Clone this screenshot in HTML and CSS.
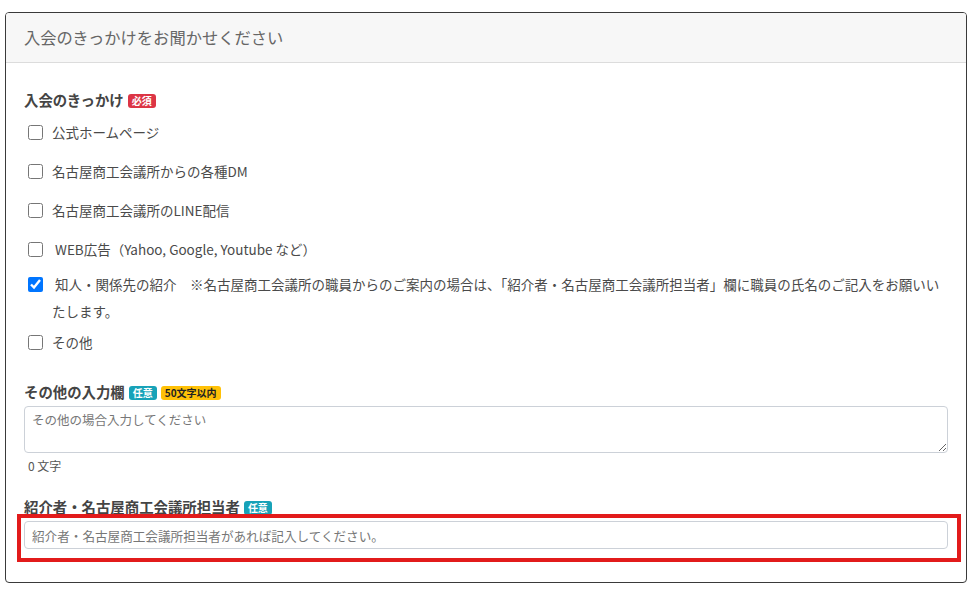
FILE: index.html
```html
<!DOCTYPE html>
<html lang="ja">

<head>
    <meta charset="UTF-8">
    <meta name="viewport" content="width=device-width, initial-scale=1.0">
    <title>入会のきっかけ</title>
    <link rel="stylesheet" href="styles.css">
</head>

<body>
    <div class="card">
        <div class="card-head">入会のきっかけをお聞かせください</div>
        <div class="card-body">
            <div class="field-label">入会のきっかけ<span class="badge badge-red">必須</span></div>
            <ul class="check-list">
                <li class="check-row"><input type="checkbox"><label>公式ホームページ</label></li>
                <li class="check-row"><input type="checkbox"><label>名古屋商工会議所からの各種DM</label></li>
                <li class="check-row"><input type="checkbox"><label>名古屋商工会議所のLINE配信</label></li>
                <li class="check-row"><input type="checkbox"><label>&nbsp;WEB広告（Yahoo, Google, Youtube など）</label></li>
                <li class="check-row check-long"><input type="checkbox" checked><label>&nbsp;知人・関係先の紹介　※名古屋商工会議所の職員からのご案内の場合は、「紹介者・名古屋商工会議所担当者」欄に職員の氏名のご記入をお願いいたします。</label></li>
                <li class="check-row"><input type="checkbox"><label>その他</label></li>
            </ul>

            <div class="field-label field-other">その他の入力欄<span class="badge badge-cyan">任意</span><span class="badge badge-yellow">50文字以内</span></div>
            <textarea class="text-area" placeholder="その他の場合入力してください"></textarea>
            <div class="char-count">0 文字</div>

            <div class="field-label field-intro">紹介者・名古屋商工会議所担当者<span class="badge badge-cyan">任意</span></div>
            <div class="input-wrap">
                <input class="text-input" type="text" placeholder="紹介者・名古屋商工会議所担当者があれば記入してください。">
                <div class="highlight"></div>
            </div>
        </div>
    </div>
</body>

</html>
```

FILE: styles.css
```css
* {
    margin: 0;
    padding: 0;
    box-sizing: border-box;
}

body {
    font-family: "Noto Sans CJK JP", "Noto Sans", sans-serif;
    color: #444;
    background: #fff;
    padding: 12px 9px 0 5px;
}

.card {
    border: 1px solid #3a3a3a;
    border-radius: 4px;
    width: 962px;
    height: 571px;
    overflow: hidden;
}

.card-head {
    height: 50px;
    line-height: 49px;
    padding: 0 18px;
    font-size: 16.3px;
    color: #666;
    background-color: #f7f7f7;
    border-bottom: 1px solid #dcdcdc;
}

.card-body {
    padding: 26px 18px 0;
}

.field-label {
    font-size: 14.4px;
    font-weight: bold;
    line-height: 21px;
    color: #444;
}

.badge {
    display: inline-block;
    font-size: 10px;
    font-weight: bold;
    line-height: 14px;
    padding: 0 4px;
    border-radius: 3px;
    margin-left: 4px;
    vertical-align: 1px;
}

.badge-red {
    background-color: #dc3545;
    color: #fff;
}

.badge-cyan {
    background-color: #17a2b8;
    color: #fff;
}

.badge-yellow {
    background-color: #ffc107;
    color: #222;
}

.check-list {
    list-style: none;
    margin-top: 9px;
}

.check-row {
    display: flex;
    align-items: flex-start;
    font-size: 13.5px;
    line-height: 27px;
    margin-bottom: 12px;
    color: #4a4a4a;
}

.check-row input {
    width: 15px;
    height: 15px;
    margin: 6px 9px 0 4px;
    flex-shrink: 0;
}

.check-long {
    margin-top: -4px;
    margin-bottom: 4px;
}

.field-other {
    margin-top: 25px;
}

.text-area {
    display: block;
    width: 100%;
    height: 47px;
    margin-top: 4px;
    padding: 3px 7px;
    font-family: inherit;
    font-size: 12.5px;
    line-height: 20px;
    border: 1px solid #ccd1d8;
    border-radius: 4px;
    resize: vertical;
}

.char-count {
    font-size: 12px;
    line-height: 18px;
    margin-top: 4px;
    padding-left: 4px;
    color: #555;
}

.field-intro {
    margin-top: 21px;
}

.input-wrap {
    position: relative;
    margin-top: 4px;
}

.text-input {
    display: block;
    width: 100%;
    height: 28px;
    padding: 0 7px;
    font-family: inherit;
    font-size: 12.6px;
    border: 1px solid #ccd1d8;
    border-radius: 4px;
}

.text-area::placeholder,
.text-input::placeholder {
    color: #777;
}

.highlight {
    position: absolute;
    left: -7px;
    top: -7px;
    right: -13px;
    bottom: -13px;
    border: 4px solid #e21b1b;
    pointer-events: none;
}
```
